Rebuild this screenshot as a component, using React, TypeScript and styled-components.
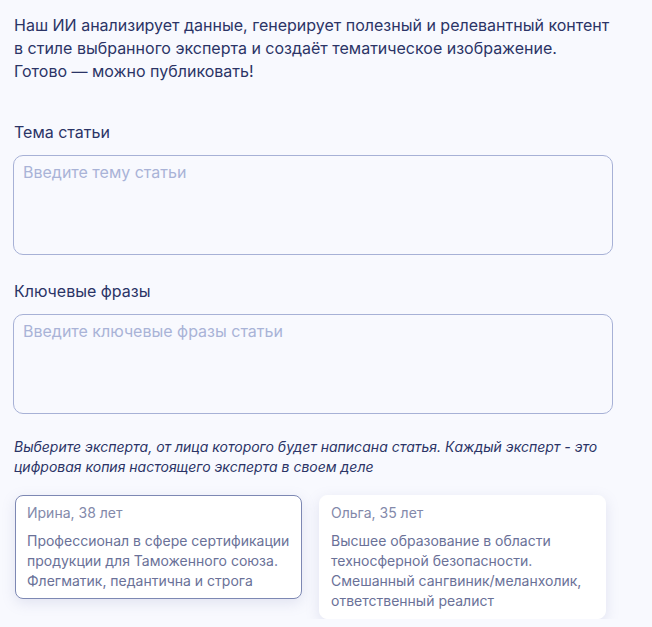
import { FC } from 'react'
import styled, { createGlobalStyle } from 'styled-components'

const GlobalStyle = createGlobalStyle`
  html, body {
    margin: 0;
    padding: 0;
    background: #f8f9fe;
  }

  body {
    font-family: Inter, 'Noto Sans', sans-serif;
    color: #2b3466;
  }
`

const Page = styled.div`
  width: 600px;
  padding: 14px 0 0 13px;
  display: flex;
  flex-direction: column;
`

const Intro = styled.p`
  margin: 0 0 0 1px;
  font-size: 16px;
  line-height: 23px;
  color: #2b3466;
`

const Field = styled.label<{ $top: number }>`
  display: flex;
  flex-direction: column;
  margin-top: ${(p) => p.$top}px;
`

const Label = styled.span`
  font-size: 16px;
  line-height: 23px;
  margin: 0 0 11px 1px;
  color: #2b3466;
`

const TextArea = styled.textarea`
  box-sizing: border-box;
  width: 600px;
  height: 100px;
  padding: 6px 9px;
  border: 1px solid #a7b1d6;
  border-radius: 10px;
  background: transparent;
  resize: none;
  font-family: Inter, 'Noto Sans', sans-serif;
  font-size: 16px;
  line-height: 20px;
  color: #2b3466;
  outline: none;

  &::placeholder {
    color: #a9b3d7;
  }
`

const Hint = styled.p`
  margin: 23px 0 0 1px;
  font-size: 14px;
  line-height: 20px;
  font-style: italic;
  color: #2b3466;
`

const Experts = styled.div`
  display: flex;
  align-items: flex-start;
  gap: 17px;
  margin-top: 18px;
  padding-left: 2px;
`

const Card = styled.button<{ $active?: boolean }>`
  box-sizing: border-box;
  width: 287px;
  padding: 7px 11px 7px 11px;
  display: flex;
  flex-direction: column;
  text-align: left;
  background: #ffffff;
  border: 1px solid ${(p) => (p.$active ? '#7d88b3' : '#ffffff')};
  border-radius: 8px;
  box-shadow: 0 4px 14px rgba(120, 130, 180, 0.18);
  font-family: Inter, 'Noto Sans', sans-serif;
  cursor: pointer;
`

const CardTitle = styled.div`
  font-size: 14px;
  line-height: 20px;
  color: #8389aa;
  margin-bottom: 8px;
`

const CardText = styled.div`
  font-size: 14px;
  line-height: 20px;
  color: #6a7198;
`

interface IExpert {
  name: string
  text: string
}

const experts: IExpert[] = [
  {
    name: 'Ирина, 38 лет',
    text: 'Профессионал в сфере сертификации продукции для Таможенного союза. Флегматик, педантична и строга',
  },
  {
    name: 'Ольга, 35 лет',
    text: 'Высшее образование в области техносферной безопасности. Смешанный сангвиник/меланхолик, ответственный реалист',
  },
]

const App: FC = () => {
  return (
    <Page>
      <GlobalStyle />
      <Intro>
        Наш ИИ анализирует данные, генерирует полезный и релевантный контент
        <br />в стиле выбранного эксперта и создаёт тематическое изображение.
        <br />
        Готово — можно публиковать!
      </Intro>
      <Field $top={38}>
        <Label>Тема статьи</Label>
        <TextArea placeholder="Введите тему статьи" />
      </Field>
      <Field $top={25}>
        <Label>Ключевые фразы</Label>
        <TextArea placeholder="Введите ключевые фразы статьи" />
      </Field>
      <Hint>
        Выберите эксперта, от лица которого будет написана статья. Каждый эксперт - это
        цифровая копия настоящего эксперта в своем деле
      </Hint>
      <Experts>
        {experts.map((expert, i) => (
          <Card key={expert.name} type="button" $active={i === 0}>
            <CardTitle>{expert.name}</CardTitle>
            <CardText>{expert.text}</CardText>
          </Card>
        ))}
      </Experts>
    </Page>
  )
}

export default App
